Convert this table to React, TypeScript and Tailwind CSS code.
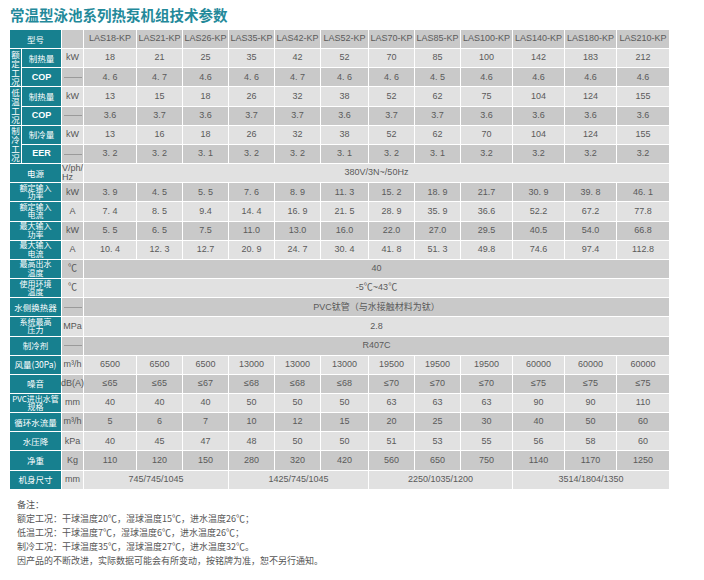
import type { ReactNode } from "react";

type Cell = string | { t: string; s: number };

type Row = {
  group?: string;
  label: string | string[];
  strong?: boolean;
  unit: ReactNode;
  cells: Cell[];
};

const models = [
  "LAS18-KP",
  "LAS21-KP",
  "LAS26-KP",
  "LAS35-KP",
  "LAS42-KP",
  "LAS52-KP",
  "LAS70-KP",
  "LAS85-KP",
  "LAS100-KP",
  "LAS140-KP",
  "LAS180-KP",
  "LAS210-KP",
];

const Dash = () => <div className="h-px w-[18px] bg-[#9a9a9a]" />;

const rows: Row[] = [
  { label: "型号", unit: "", cells: models },
  {
    group: "额定工况",
    label: "制热量",
    unit: "kW",
    cells: ["18", "21", "25", "35", "42", "52", "70", "85", "100", "142", "183", "212"],
  },
  {
    label: "COP",
    strong: true,
    unit: <Dash />,
    cells: ["4. 6", "4. 7", "4.6", "4. 6", "4. 7", "4. 6", "4. 6", "4. 5", "4.6", "4.6", "4.6", "4.6"],
  },
  {
    group: "低温工况",
    label: "制热量",
    unit: "kW",
    cells: ["13", "15", "18", "26", "32", "38", "52", "62", "75", "104", "124", "155"],
  },
  {
    label: "COP",
    strong: true,
    unit: <Dash />,
    cells: ["3.6", "3.7", "3.6", "3.7", "3.7", "3.6", "3.7", "3.7", "3.6", "3.6", "3.6", "3.6"],
  },
  {
    group: "制冷工况",
    label: "制冷量",
    unit: "kW",
    cells: ["13", "16", "18", "26", "32", "38", "52", "62", "70", "104", "124", "155"],
  },
  {
    label: "EER",
    strong: true,
    unit: <Dash />,
    cells: ["3. 2", "3. 2", "3. 1", "3. 2", "3. 2", "3. 1", "3. 2", "3. 1", "3.2", "3.2", "3.2", "3.2"],
  },
  {
    label: "电源",
    unit: (
      <span className="text-left leading-[9px]">
        V/ph/
        <br />
        Hz
      </span>
    ),
    cells: [{ t: "380V/3N~/50Hz", s: 12 }],
  },
  {
    label: ["额定输入", "功率"],
    unit: "kW",
    cells: ["3. 9", "4. 5", "5. 5", "7. 6", "8. 9", "11. 3", "15. 2", "18. 9", "21.7", "30. 9", "39. 8", "46. 1"],
  },
  {
    label: ["额定输入", "电流"],
    unit: "A",
    cells: ["7. 4", "8. 5", "9.4", "14. 4", "16. 9", "21. 5", "28. 9", "35. 9", "36.6", "52.2", "67.2", "77.8"],
  },
  {
    label: ["最大输入", "功率"],
    unit: "kW",
    cells: ["5. 5", "6. 5", "7.5", "11.0", "13.0", "16.0", "22.0", "27.0", "29.5", "40.5", "54.0", "66.8"],
  },
  {
    label: ["最大输入", "电流"],
    unit: "A",
    cells: ["10. 4", "12. 3", "12.7", "20. 9", "24. 7", "30. 4", "41. 8", "51. 3", "49.8", "74.6", "97.4", "112.8"],
  },
  { label: ["最高出水", "温度"], unit: "℃", cells: [{ t: "40", s: 12 }] },
  { label: ["使用环境", "温度"], unit: "℃", cells: [{ t: "-5℃~43℃", s: 12 }] },
  { label: "水侧换热器", unit: <Dash />, cells: [{ t: "PVC钛管（与水接触材料为钛）", s: 12 }] },
  { label: ["系统最高", "压力"], unit: "MPa", cells: [{ t: "2.8", s: 12 }] },
  { label: "制冷剂", unit: <Dash />, cells: [{ t: "R407C", s: 12 }] },
  {
    label: "风量(30Pa)",
    unit: "m³/h",
    cells: ["6500", "6500", "6500", "13000", "13000", "13000", "19500", "19500", "19500", "60000", "60000", "60000"],
  },
  {
    label: "噪音",
    unit: "dB(A)",
    cells: ["≤65", "≤65", "≤67", "≤68", "≤68", "≤68", "≤70", "≤70", "≤70", "≤75", "≤75", "≤75"],
  },
  {
    label: ["PVC进出水管", "规格"],
    unit: "mm",
    cells: ["40", "40", "40", "50", "50", "50", "63", "63", "63", "90", "90", "110"],
  },
  {
    label: "循环水流量",
    unit: "m³/h",
    cells: ["5", "6", "7", "10", "12", "15", "20", "25", "30", "40", "50", "60"],
  },
  {
    label: "水压降",
    unit: "kPa",
    cells: ["40", "45", "47", "48", "50", "50", "51", "53", "55", "56", "58", "60"],
  },
  {
    label: "净重",
    unit: "Kg",
    cells: ["110", "120", "150", "280", "320", "420", "560", "650", "750", "1140", "1170", "1250"],
  },
  {
    label: "机身尺寸",
    unit: "mm",
    cells: [
      { t: "745/745/1045", s: 3 },
      { t: "1425/745/1045", s: 3 },
      { t: "2250/1035/1200", s: 3 },
      { t: "3514/1804/1350", s: 3 },
    ],
  },
];

const spanClass: Record<number, string> = {
  1: "",
  3: "col-span-3",
  12: "col-span-12",
};

const notes = [
  "备注：",
  "额定工况：干球温度20℃，湿球温度15℃，进水温度26℃；",
  "低温工况：干球温度7℃，湿球温度6℃，进水温度26℃；",
  "制冷工况：干球温度35℃，湿球温度27℃，进水温度32℃。",
  "因产品的不断改进，实际数据可能会有所变动，按铭牌为准，恕不另行通知。",
];

export default function App() {
  return (
    <div className="h-[580px] w-[704px] overflow-hidden bg-white font-['Liberation_Sans','Noto_Sans_CJK_SC',sans-serif]">
      <h1 className="ml-[10px] pt-[5px] font-['Noto_Sans_CJK_SC',sans-serif] text-[14.5px] leading-[20px] font-bold text-[#23899a]">
        常温型泳池系列热泵机组技术参数
      </h1>

      <div className="mt-[5px] ml-[10px] grid w-[658px] auto-rows-[18.17px] grid-cols-[11px_39px_21px_52px_45px_45px_45px_45px_47px_45px_45px_51px_51px_51px_52px] gap-px bg-white text-[9px] text-[#5a5a5a]">
        {rows.map((row, i) => {
          const dark = i % 2 === 0;
          const bg = dark ? "bg-[#c9c9c9]" : "bg-[#e1e1e1]";
          const label = Array.isArray(row.label) ? row.label : [row.label];
          const inGroup = i >= 1 && i <= 6;
          return [
            row.group ? (
              <div
                key={`g${i}`}
                className="row-span-2 flex flex-col items-center justify-center bg-[#17808f] font-['Noto_Sans_CJK_SC',serif] text-[8.5px] leading-[9px] text-white"
              >
                {row.group.split("").map((c, k) => (
                  <span key={k}>{c}</span>
                ))}
              </div>
            ) : null,
            <div
              key={`l${i}`}
              className={`${inGroup ? "" : "col-span-2"} flex flex-col items-center justify-center overflow-hidden bg-[#17808f] text-center whitespace-nowrap text-white ${
                row.strong
                  ? "font-['Liberation_Sans',sans-serif] text-[9px] font-bold"
                  : label.length > 1
                    ? "font-['Noto_Sans_CJK_SC',serif] text-[8px] leading-[8.5px]"
                    : "font-['Noto_Sans_CJK_SC',serif] text-[8.5px] leading-[9px]"
              }`}
            >
              {label.map((t, k) => (
                <span key={k}>{t}</span>
              ))}
            </div>,
            <div key={`u${i}`} className={`${bg} flex items-center justify-center text-[#555]`}>
              {row.unit}
            </div>,
            ...row.cells.map((c, k) => {
              const text = typeof c === "string" ? c : c.t;
              const span = typeof c === "string" ? 1 : c.s;
              return (
                <div
                  key={`c${i}-${k}`}
                  className={`${bg} ${spanClass[span]} flex items-center justify-center whitespace-nowrap`}
                >
                  {text}
                </div>
              );
            }),
          ];
        })}
      </div>

      <div className="mt-[9px] ml-[17px] font-['Noto_Sans_CJK_SC',sans-serif] text-[9px] leading-[14px] text-[#555]">
        {notes.map((n) => (
          <p key={n}>{n}</p>
        ))}
      </div>
    </div>
  );
}
